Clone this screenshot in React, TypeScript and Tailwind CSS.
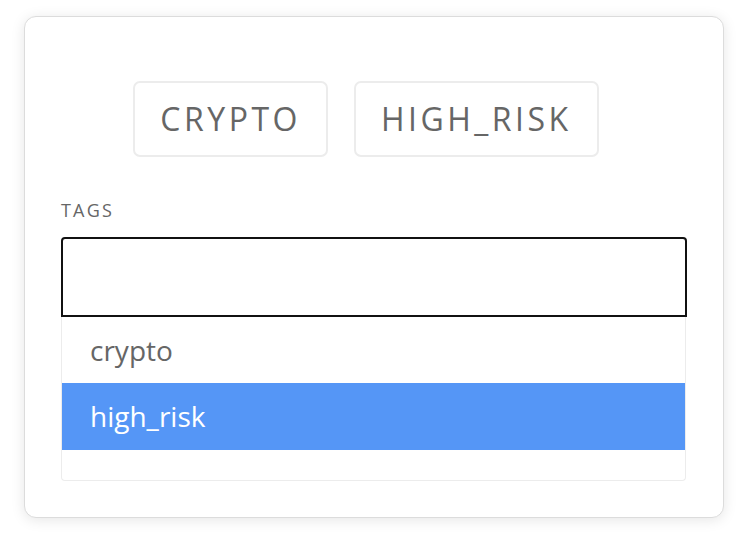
import React from "react";

export default function App() {
  return (
    <div
      className="min-h-[534px] w-[748px] bg-white pt-[16px] pl-[24px]"
      style={{ fontFamily: '"Open Sans", "Liberation Sans", sans-serif' }}
    >
      <div className="w-[700px] h-[502px] rounded-[12px] border border-[#dcdcdc] bg-white shadow-[0_2px_14px_rgba(0,0,0,0.10)] px-[36px] pt-[64px]">
        <div className="flex justify-center gap-[26px] pr-[16px]">
          <div className="rounded-[7px] border-2 border-[#ececec] px-[25px] py-[12px] text-[32px] leading-[48px] tracking-[3.5px] text-[#666]">
            CRYPTO
          </div>
          <div className="rounded-[7px] border-2 border-[#ececec] px-[25px] py-[12px] text-[32px] leading-[48px] tracking-[3.5px] text-[#666]">
            HIGH_RISK
          </div>
        </div>
        <div className="mt-[40px] text-[18px] leading-[27px] tracking-[2.2px] text-[#666]">
          TAGS
        </div>
        <div className="mt-[13px] h-[80px] rounded-t-[4px] border-2 border-[#111]" />
        <div className="w-[625px] rounded-b-[4px] border border-t-0 border-[#ececec]">
          <div className="px-[28px] py-[12px] text-[28px] leading-[42px] text-[#666]">
            crypto
          </div>
          <div className="bg-[#5596f6] px-[28px] py-[12px] text-[28px] leading-[43px] text-white">
            high_risk
          </div>
          <div className="h-[30px]" />
        </div>
      </div>
    </div>
  );
}
